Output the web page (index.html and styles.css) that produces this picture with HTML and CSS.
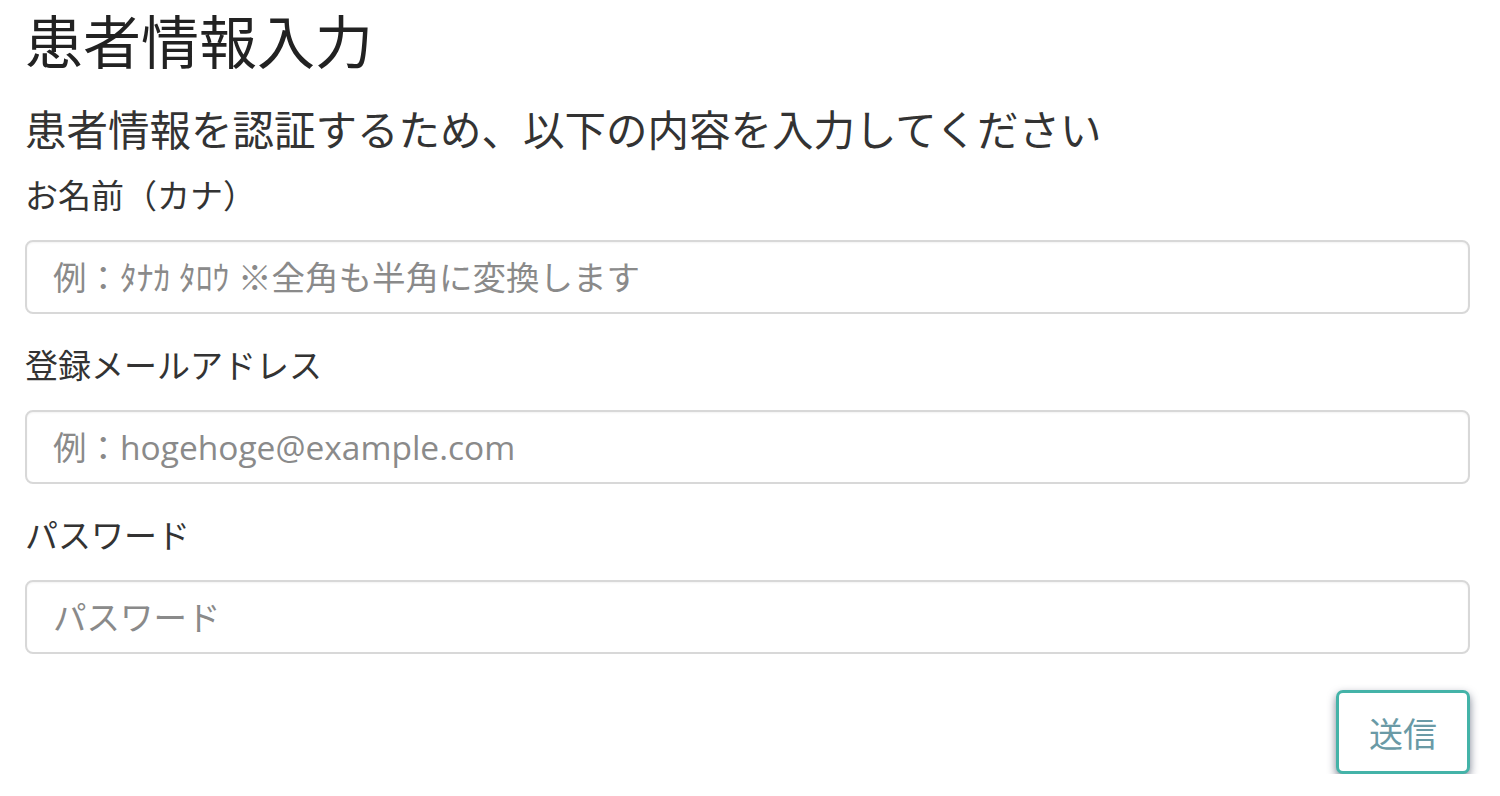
FILE: index.html
```html
<!DOCTYPE html>
<html lang="ja">
<head>
  <meta charset="UTF-8">
  <meta name="viewport" content="width=device-width, initial-scale=1.0">
  <title>患者情報入力</title>
  <link rel="stylesheet" href="styles.css">
</head>
<body>
  <div class="container">
    <h1 class="page-title">患者情報入力</h1>
    <p class="lead">患者情報を認証するため、以下の内容を入力してください</p>

    <form class="patient-form">
      <div class="form-group">
        <label for="kana">お名前（カナ）</label>
        <input type="text" id="kana" class="form-control" placeholder="例：ﾀﾅｶ ﾀﾛｳ ※全角も半角に変換します">
      </div>

      <div class="form-group">
        <label for="email">登録メールアドレス</label>
        <input type="email" id="email" class="form-control" placeholder="例：hogehoge@example.com">
      </div>

      <div class="form-group">
        <label for="password">パスワード</label>
        <input type="password" id="password" class="form-control" placeholder="パスワード">
      </div>

      <div class="form-actions">
        <button type="submit" class="btn-submit">送信</button>
      </div>
    </form>
  </div>
</body>
</html>
```

FILE: styles.css
```css
body {
  margin: 0;
  background-color: #fff;
  color: #333;
  font-family: "Noto Sans CJK JP", "Noto Sans", sans-serif;
}

.container {
  padding: 0 30px 0 25px;
}

.page-title {
  margin: 0;
  font-size: 58px;
  font-weight: normal;
  line-height: 78px;
  color: #222;
}

.lead {
  margin: 26px 0 0;
  font-size: 41.5px;
  line-height: 48px;
  color: #333;
}

.patient-form {
  margin-top: 20px;
}

.form-group {
  display: flex;
  flex-direction: column;
}

.form-group + .form-group {
  margin-top: 28px;
}

.form-group label {
  font-size: 33px;
  line-height: 44px;
  margin: 0 0 24px;
}

.form-control {
  box-sizing: border-box;
  height: 74px;
  padding: 0 26px;
  border: 2px solid #d8d8d8;
  border-radius: 8px;
  font-family: "Open Sans", "Noto Sans CJK JP", sans-serif;
  font-size: 33.5px;
  color: #555;
  background: #fff;
  box-shadow: inset 0 1px 2px rgba(0, 0, 0, 0.05);
}

.form-control::placeholder {
  color: #8a8a8a;
}

.form-actions {
  display: flex;
  justify-content: flex-end;
  margin-top: 36px;
}

.btn-submit {
  width: 134px;
  height: 84px;
  border: 3px solid #44b3a8;
  border-radius: 7px;
  background-color: #fff;
  color: #6a9aa6;
  font-family: "Noto Sans CJK JP", "Noto Sans", sans-serif;
  font-size: 34px;
  cursor: pointer;
  box-shadow: 0 4px 9px rgba(50, 60, 85, 0.65);
}
```
